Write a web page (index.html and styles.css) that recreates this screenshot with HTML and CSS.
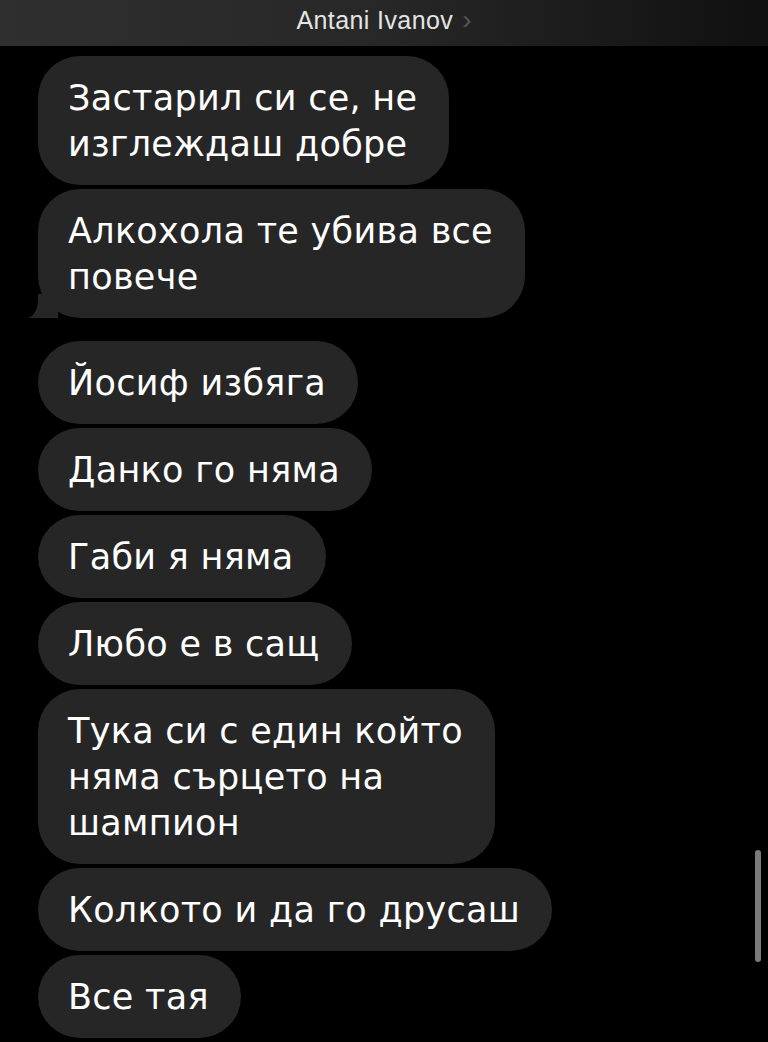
FILE: index.html
```html
<!DOCTYPE html>
<html lang="bg">
<head>
    <meta charset="UTF-8">
    <title>Antani Ivanov</title>
    <link rel="stylesheet" href="styles.css">
</head>
<body>
<div class="topbar">
    <span class="name">Antani Ivanov</span>
    <span class="chev">&#8250;</span>
</div>
<div class="chat">
    <div class="bubble">Застарил си се, не<br>изглеждаш добре</div>
    <div class="bubble tail">Алкохола те убива все<br>повече</div>
    <div class="bubble">Йосиф избяга</div>
    <div class="bubble">Данко го няма</div>
    <div class="bubble">Габи я няма</div>
    <div class="bubble">Любо е в сащ</div>
    <div class="bubble">Тука си с един който<br>няма сърцето на<br>шампион</div>
    <div class="bubble">Колкото и да го друсаш</div>
    <div class="bubble">Все тая</div>
</div>
<div class="scrollbar"></div>
</body>
</html>
```

FILE: styles.css
```css
body{
    margin: 0;
    background: #000;
    font-family: "DejaVu Sans", "Liberation Sans", sans-serif;
    color: #fff;
    overflow: hidden;
    height: 1042px;
}
.topbar{
    height: 46px;
    display: flex;
    justify-content: center;
    align-items: center;
    gap: 9px;
    background: linear-gradient(to right, #2f2f2f, #272727 50%, #101010);
    padding-bottom: 6px;
    box-sizing: border-box;
    font-family: "Liberation Sans", sans-serif;
}
.topbar .name{
    font-size: 25px;
    letter-spacing: 0.4px;
    color: #e4e4e4;
}
.topbar .chev{
    font-size: 28px;
    color: #555;
    line-height: 1;
}
.chat{
    padding: 10px 0 0 38px;
}
.bubble{
    position: relative;
    width: fit-content;
    background: #262626;
    border-radius: 42px;
    padding: 19px 32px 18px 30px;
    font-size: 35px;
    line-height: 46px;
    letter-spacing: 0.3px;
    margin-bottom: 4px;
    white-space: nowrap;
}
.bubble.tail{
    margin-bottom: 23px;
}
/* tail under the last bubble of the group */
.bubble.tail::before{
    content: "";
    position: absolute;
    bottom: 0;
    left: -10px;
    width: 30px;
    height: 24px;
    background: #262626;
}
.bubble.tail::after{
    content: "";
    position: absolute;
    bottom: 0;
    left: -22px;
    width: 22px;
    height: 26px;
    background: #000;
    border-bottom-right-radius: 12px 18px;
}
.scrollbar{
    position: absolute;
    left: 755px;
    top: 850px;
    width: 6px;
    height: 112px;
    border-radius: 3px;
    background: #7a7a7a;
}
```
